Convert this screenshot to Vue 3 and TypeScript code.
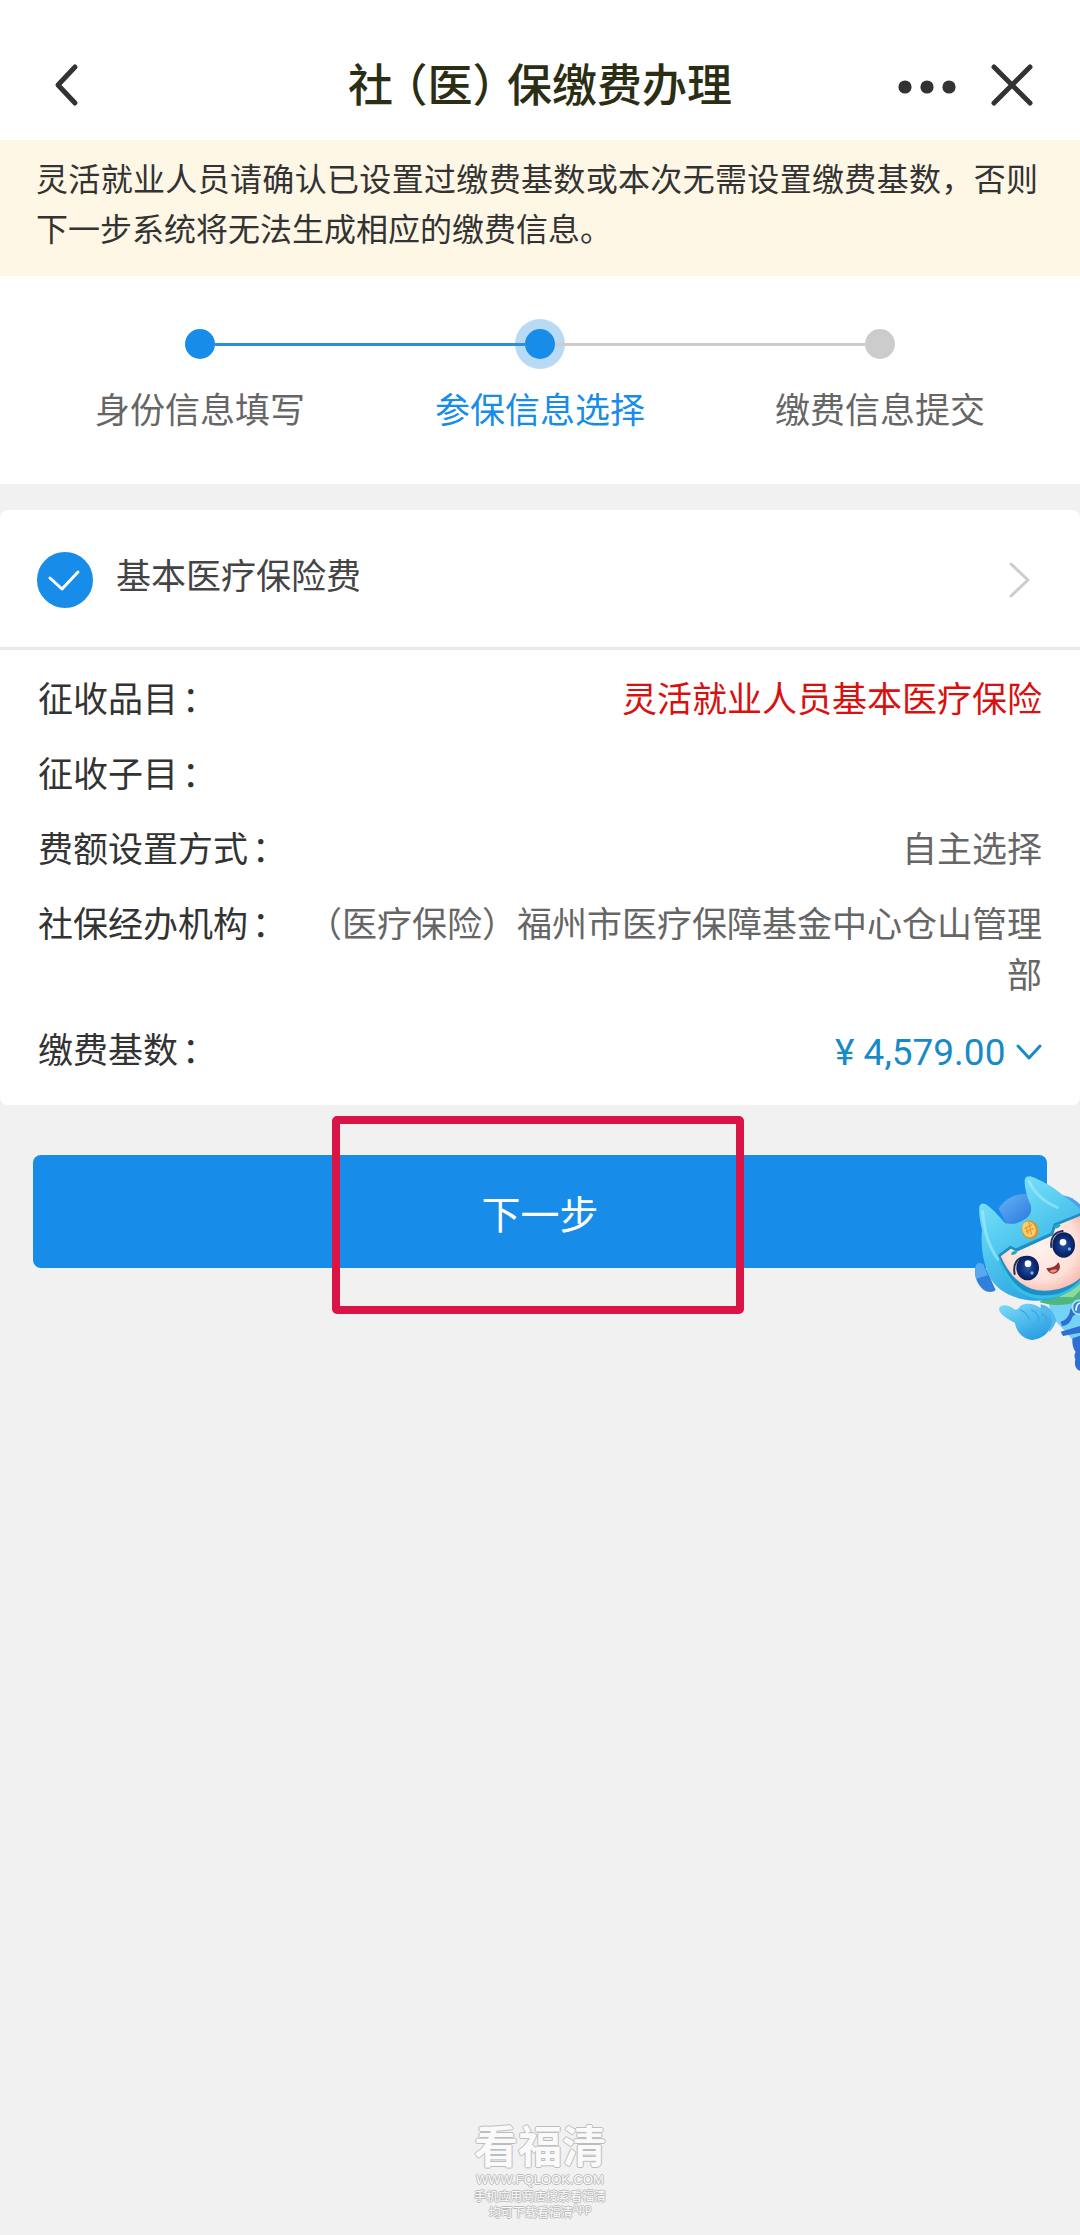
<script setup lang="ts">
import { ref } from 'vue'

type StepState = 'done' | 'current' | 'todo'

interface Step {
  label: string
  state: StepState
  before: string
  after: string
}

interface Detail {
  label: string
  value: string
  highlight?: boolean
}

const steps: Step[] = [
  { label: '身份信息填写', state: 'done', before: 'none', after: 'blue' },
  { label: '参保信息选择', state: 'current', before: 'blue', after: 'grey' },
  { label: '缴费信息提交', state: 'todo', before: 'grey', after: 'none' },
]

const details: Detail[] = [
  { label: '征收品目', value: '灵活就业人员基本医疗保险', highlight: true },
  { label: '征收子目', value: '' },
  { label: '费额设置方式', value: '自主选择' },
  { label: '社保经办机构', value: '（医疗保险）福州市医疗保障基金中心仓山管理部' },
]

const selected = ref(true)
const base = ref('4579')
</script>

<template>
  <div class="page">
    <header class="bar">
      <button class="icon-btn back" type="button" aria-label="返回">
        <svg width="26" height="44" viewBox="0 0 26 44">
          <path d="M21 4 4 22l17 18" />
        </svg>
      </button>
      <h1 class="title">社<span class="paren">（医）</span>保缴费办理</h1>
      <div class="actions">
        <button class="icon-btn" type="button" aria-label="更多">
          <svg class="dots" width="58" height="44" viewBox="0 0 58 44">
            <circle cx="7" cy="24" r="6.6" />
            <circle cx="29" cy="24" r="6.6" />
            <circle cx="51" cy="24" r="6.6" />
          </svg>
        </button>
        <button class="icon-btn" type="button" aria-label="关闭">
          <svg width="44" height="44" viewBox="0 0 44 44">
            <path d="m4 4 36 36M40 4 4 40" />
          </svg>
        </button>
      </div>
    </header>

    <p class="notice">灵活就业人员请确认已设置过缴费基数或本次无需设置缴费基数，否则下一步系统将无法生成相应的缴费信息。</p>

    <ol class="steps">
      <li v-for="s in steps" :key="s.label" class="step" :class="s.state">
        <div class="track">
          <span class="line" :class="s.before"></span>
          <span class="dot"></span>
          <span class="line" :class="s.after"></span>
        </div>
        <span class="step-label">{{ s.label }}</span>
      </li>
    </ol>

    <main class="content">
      <section class="card">
        <div class="card-head">
          <label class="pick">
            <span class="tick">
              <input v-model="selected" type="checkbox" />
              <svg v-if="selected" width="56" height="56" viewBox="0 0 56 56">
                <path d="m13 26 12 11 16-17" />
              </svg>
            </span>
            <span class="pick-text">基本医疗保险费</span>
          </label>
          <button class="icon-btn" type="button" aria-label="查看详情">
            <svg class="arrow" width="24" height="38" viewBox="0 0 24 38">
              <path d="m3 3 17 16L3 35" />
            </svg>
          </button>
        </div>

        <div class="details">
          <div v-for="d in details" :key="d.label" class="row">
            <span class="name">{{ d.label }}<span class="colon">：</span></span>
            <span class="value" :class="{ red: d.highlight }">{{ d.value }}</span>
          </div>
          <div class="row">
            <label class="name" for="base">缴费基数<span class="colon">：</span></label>
            <span class="amount">
              <select id="base" v-model="base">
                <option value="4579">¥ 4,579.00</option>
              </select>
              <svg width="26" height="18" viewBox="0 0 26 18">
                <path d="m2 2 11 12L24 2" />
              </svg>
            </span>
          </div>
        </div>
      </section>

      <div class="submit">
        <button class="next" type="button">下一步</button>
        <div class="frame"></div>
        <svg class="mascot" width="140" height="230" viewBox="0 0 420 690" aria-hidden="true">
          <defs>
            <linearGradient id="helmet" x1="0" y1="0" x2="0.5" y2="1">
              <stop offset="0" stop-color="#8ce8fb" />
              <stop offset="0.5" stop-color="#55cbf0" />
              <stop offset="1" stop-color="#2da5e2" />
            </linearGradient>
            <linearGradient id="dome" x1="0" y1="0" x2="1" y2="1">
              <stop offset="0" stop-color="#64b4f5" />
              <stop offset="1" stop-color="#2874dc" />
            </linearGradient>
            <radialGradient id="face" cx="0.5" cy="0.4" r="0.7">
              <stop offset="0" stop-color="#fff3ee" />
              <stop offset="0.65" stop-color="#fde0d8" />
              <stop offset="1" stop-color="#f6b3a8" />
            </radialGradient>
            <radialGradient id="eye" cx="0.5" cy="0.5" r="0.5">
              <stop offset="0" stop-color="#2457a8" />
              <stop offset="0.6" stop-color="#0f2f7c" />
              <stop offset="1" stop-color="#081d58" />
            </radialGradient>
            <linearGradient id="hand" x1="0" y1="0" x2="0.6" y2="1">
              <stop offset="0" stop-color="#7fdcf8" />
              <stop offset="1" stop-color="#2ba0e4" />
            </linearGradient>
          </defs>
          <path d="M325 455 420 430v150l-22-10c-18-22-40-45-63-70Z" fill="#74d3f5" />
          <path d="M362 515c15-3 27-17 29-37l29-18v25l-22 14c-5 17-16 28-32 30ZM362 545l58-17v20l-51 10ZM398 565l22-8v105c-12-3-18-18-14-33-4-10-3-17 1-23-8-10-12-28-9-41Z" fill="#2f6fd3" />
          <path d="M298 456c18-14 30-20 40-25l82-50v72c-40 14-82 17-122 3Z" fill="#4fb67d" />
          <path d="m330 440 70 2 20-20v-30l-30 14Z" fill="#8bdb9b" />
          <ellipse cx="416" cy="472" rx="19" ry="21" fill="#3d83dd" stroke="#a6e7fa" stroke-width="5" />
          <path d="M408 480c1-14 6-20 12-21" fill="none" stroke="#fff" stroke-width="5" />
          <path d="M107 348c4-11 15-11 26-4l34 76c-8 8-24 8-36 0-22-19-30-46-24-72Z" fill="#2f80dc" />
          <path d="M107 348c4-11 15-11 24-4l12 32-35 10c-3-13-4-27-1-38Z" fill="#56a9ee" />
          <path d="M176 176c18-31 54-48 91-43l22 76c-30 14-67 15-91 9Z" fill="url(#dome)" />
          <path d="M368 136c20 4 37 12 52 27v55l-40-30Z" fill="#4c9ff0" />
          <path d="M118 170c4-13 14-12 26-3 22 17 39 39 52 53 22 4 40 0 58-12 19-13 22-26 18-43-13-29-19-55-18-75 3-15 17-13 30-7 38 17 64 34 93 59 15 9 29 22 43 35V395C380 440 330 455 280 452 215 447 165 420 145 372 128 330 122 290 126 240c-6-25-10-50-8-70Z" fill="url(#helmet)" />
          <path d="M128 185c4 60 20 108 46 143M267 94c18 38 46 62 85 78" fill="none" stroke="#a9f1fd" stroke-width="9" stroke-linecap="round" opacity="0.55" />
          <path d="m174 315 37-28 16 8 106-47 8-27 79-31v210c-35 30-84 42-134 36-48-8-83-54-112-121Z" fill="#1c8fc7" />
          <path d="m182 319 31-23 17 9 109-49 9-29 72-29v187c-34 29-80 41-128 36-46-9-83-43-110-102Z" fill="url(#face)" />
          <path d="M174 315c26 69 65 117 123 121 52 5 94-14 123-46v12c-38 35-82 47-126 44-64-9-106-56-120-131Z" fill="#36bfe5" />
          <path d="M214 309c5-7 12-8 18-2-5 6-11 9-18 8ZM343 228c7-7 14-8 19-2-5 8-11 11-19 8Z" fill="#27a6c2" />
          <path d="M224 372c-6-31 8-51 34-52M334 291c-4-27 10-45 34-48" fill="none" stroke="#252d59" stroke-width="6" stroke-linecap="round" />
          <ellipse cx="263" cy="354" rx="34" ry="37" fill="url(#eye)" />
          <ellipse cx="371" cy="285" rx="34" ry="38" fill="url(#eye)" />
          <circle cx="264" cy="341" r="10" fill="#fff" />
          <circle cx="369" cy="277" r="10" fill="#fff" />
          <circle cx="276" cy="369" r="5" fill="#79b4ed" />
          <circle cx="388" cy="297" r="5" fill="#79b4ed" />
          <path d="M319 354c16 2 28-5 36-17 11 14 1 32-14 34-11 0-18-6-22-17Z" fill="#8e3235" />
          <path d="M328 364c8-7 18-8 25-5-5 8-16 13-25 5Z" fill="#f58b78" />
          <ellipse cx="270" cy="239" rx="25" ry="28" fill="#d9912c" transform="rotate(-25 270 239)" />
          <ellipse cx="267" cy="238" rx="20" ry="24" fill="#f8cf6e" transform="rotate(-25 267 238)" />
          <path d="m255 235 20-10m-16 20 21-9m-13-19 7 35m-15-20 5 19" stroke="#e69a32" stroke-width="4" fill="none" />
          <path d="M302 463c30 5 42 30 47 49-7 18-13 27-22 34 4-28-4-50-25-62Z" fill="#51b9ed" />
          <path d="M180 470c10-8 28-5 41 6 8 7 13 0 21-9 20-12 45-4 61 8 21 7 34 21 32 45-7 30-28 47-58 50-30-3-48-25-52-51-20-12-41-23-47-37-2-5 0-9 2-12Z" fill="url(#hand)" />
          <path d="M242 480c12 6 21 14 25 26M275 480c14 7 22 18 22 32M305 490c10 6 15 15 15 25" fill="none" stroke="#3aa6e2" stroke-width="4" stroke-linecap="round" />
        </svg>
      </div>
    </main>

    <footer class="mark">
      <strong class="mark-name">看福清</strong>
      <span class="mark-site">WWW.FQLOOK.COM</span>
      <span class="mark-text">手机应用商店搜索看福清</span>
      <span class="mark-text">均可下载看福清<sup>App</sup></span>
    </footer>
  </div>
</template>

<style>
body {
  margin: 0;
  background: #f1f1f1;
}
</style>

<style scoped>
.page {
  display: flex;
  flex-direction: column;
  min-height: 100vh;
  overflow: hidden;
  background: #f1f1f1;
  color: #333;
  font-family: 'Noto Sans CJK SC', sans-serif;
  font-size: 35px;
  line-height: 50px;
}

.icon-btn {
  display: block;
  padding: 0;
  border: 0;
  background: none;
}

svg {
  display: block;
  fill: none;
  stroke-linecap: round;
  stroke-linejoin: round;
}

.bar {
  display: grid;
  grid-template-columns: 1fr auto 1fr;
  align-items: center;
  height: 110px;
  padding: 30px 46px 0;
  background: #fff;
}

.back {
  margin-left: 8px;
}

.bar path {
  stroke: #333;
  stroke-width: 5;
}

.dots {
  fill: #333;
}

.title {
  margin: 0;
  padding-bottom: 4px;
  color: #2c2e14;
  font-size: 45px;
  font-weight: 500;
  line-height: 60px;
}

.paren {
  margin: 0 12px;
  font-feature-settings: 'halt';
}

.actions {
  display: flex;
  justify-content: flex-end;
  gap: 34px;
}

.notice {
  margin: 0;
  padding: 12px 42px 24px 36px;
  background: #fef7e5;
  font-size: 32px;
  text-align: justify;
}

.steps {
  display: flex;
  margin: 0;
  padding: 43px 30px 51px;
  background: #fff;
  list-style: none;
}

.step {
  flex: 1;
  color: #666;
  text-align: center;
}

.track {
  display: flex;
  align-items: center;
  height: 50px;
  margin-bottom: 14px;
}

.line {
  position: relative;
  flex: 1;
  height: 3px;
}

.line.blue {
  background: #2b90d9;
}

.line.grey {
  background: #ccc;
}

.dot {
  width: 30px;
  height: 30px;
  border-radius: 50%;
  background: #188ce9;
}

.todo .dot {
  background: #ccc;
}

.current .dot {
  box-shadow: 0 0 0 10px #b9daf5;
}

.current .step-label {
  color: #188ce9;
}

.content {
  margin-top: 26px;
}

.card {
  border-radius: 8px;
  background: #fff;
}

.card-head {
  display: flex;
  align-items: center;
  justify-content: space-between;
  height: 135px;
  padding: 2px 48px 0 37px;
  border-bottom: 3px solid #e9e9e9;
}

.pick {
  display: flex;
  align-items: center;
  gap: 23px;
}

.tick {
  display: grid;
}

.tick > * {
  grid-area: 1 / 1;
}

.tick input {
  width: 56px;
  height: 56px;
  margin: 0;
  border: 2px solid #ccc;
  border-radius: 50%;
  appearance: none;
}

.tick input:checked {
  border-color: #188ce9;
  background: #188ce9;
}

.tick svg {
  z-index: 1;
  stroke: #fff;
  stroke-width: 3;
  pointer-events: none;
}

.pick-text {
  padding-bottom: 12px;
  color: #444;
}

.arrow {
  stroke: #ccc;
  stroke-width: 3;
}

.details {
  display: flex;
  flex-direction: column;
  gap: 24px;
  padding: 21px 38px 27px;
  line-height: 51px;
}

.row {
  display: flex;
  justify-content: space-between;
  gap: 16px;
}

.name {
  flex: none;
}

.colon {
  margin-left: 4px;
}

.value {
  color: #666;
  text-align: right;
}

.value.red {
  color: #d8110f;
}

.amount {
  display: flex;
  align-items: center;
  gap: 10px;
  padding-top: 6px;
}

.amount select {
  height: 50px;
  padding: 0;
  border: 0;
  background: none;
  color: #188ac8;
  font-family: Roboto, 'Noto Sans CJK SC', sans-serif;
  font-size: 37px;
  line-height: 50px;
  appearance: none;
}

.amount svg {
  stroke: #188ac8;
  stroke-width: 3;
}

.submit {
  position: relative;
  padding: 50px 33px 0;
}

.next {
  display: block;
  width: 100%;
  height: 113px;
  padding: 0;
  border: 0;
  border-radius: 8px;
  background: #188ce9;
  color: #fff;
  font-family: inherit;
  font-size: 39px;
}

/* Highlight around the next-step button */
.frame {
  position: absolute;
  top: 11px;
  left: 50%;
  box-sizing: border-box;
  width: 412px;
  height: 198px;
  margin-left: -208px;
  border: 8px solid #da1444;
  border-radius: 5px;
  pointer-events: none;
}

/* Assistant floating at the right edge */
.mascot {
  position: absolute;
  top: 45px;
  right: 0;
}

.mark {
  display: flex;
  flex-direction: column;
  align-items: center;
  margin-top: auto;
  padding-bottom: 15px;
  color: #fafafa;
  font-size: 12px;
  line-height: 16px;
  text-shadow: 1px 0 #bdbdbd, -1px 0 #bdbdbd, 0 1px #bdbdbd, 0 -1px #bdbdbd;
}

.mark-name {
  margin-bottom: 4px;
  font-size: 44px;
  line-height: 48px;
}

.mark-site {
  font-family: 'Liberation Sans', sans-serif;
  font-size: 13px;
  line-height: 16px;
}

.mark sup {
  font-size: 10px;
  line-height: 0;
}
</style>
